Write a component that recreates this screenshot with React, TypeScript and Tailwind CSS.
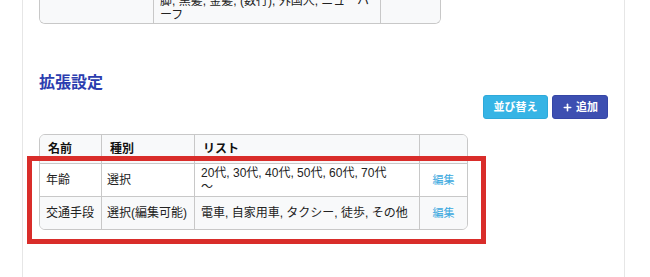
import { Plus } from "lucide-react";

type Row = { name: string; kind: string; list: React.ReactNode };

const rows: Row[] = [
  {
    name: "年齢",
    kind: "選択",
    list: (
      <>
        20代, 30代, 40代, 50代, 60代, 70代
        <br />〜
      </>
    ),
  },
  { name: "交通手段", kind: "選択(編集可能)", list: "電車, 自家用車, タクシー, 徒歩, その他" },
];

export default function App() {
  return (
    <div className="min-h-[277px] bg-white font-['Liberation_Sans','Noto_Sans_CJK_JP',sans-serif] text-[12px] text-[#222]">
      <div className="ml-[22px] w-[603px] min-h-[277px] border-x border-[#e6e6e6] px-4">
        {/* previous table (cut off at the top) */}
        <div className="h-[24px] overflow-hidden flex flex-col justify-end">
          <div className="shrink-0 w-[402px] border border-t-0 border-[#c8c8c8] rounded-b-[6px] overflow-hidden">
            <table className="w-full table-fixed border-separate border-spacing-0">
              <colgroup>
                <col className="w-[113px]" />
                <col className="w-[227px]" />
                <col />
              </colgroup>
              <tbody>
                <tr className="bg-[#f8f9fa]">
                  <td />
                  <td className="border-l border-[#c8c8c8] pl-[6px] pt-[3px] pb-[1px] leading-[14px] align-middle">
                    脚, 黒髪, 金髪, (数行), 外国人, ニューハ
                    <br />
                    ーフ
                  </td>
                  <td className="border-l border-[#c8c8c8]" />
                </tr>
              </tbody>
            </table>
          </div>
        </div>

        {/* 拡張設定 */}
        <h2 className="mt-[47px] text-[16px] leading-[24px] font-bold text-[#2b3daf]">拡張設定</h2>
        <div className="flex justify-end gap-1">
          <button className="h-[24px] w-[65px] rounded-[3px] border border-[#2ea9da] bg-[#36b4e5] text-[11px] font-bold text-white">
            並び替え
          </button>
          <button className="h-[24px] w-[56px] rounded-[3px] border border-[#3546a6] bg-[#3d4fb1] text-[11px] font-bold text-white flex items-center justify-center gap-[3px]">
            <Plus size={11} strokeWidth={3.5} />
            追加
          </button>
        </div>

        <div className="relative mt-[15px] w-[429px]">
          <div className="border border-[#c8c8c8] rounded-[6px] overflow-hidden">
            <table className="w-full table-fixed border-separate border-spacing-0">
              <colgroup>
                <col className="w-[61px]" />
                <col className="w-[93px]" />
                <col className="w-[225px]" />
                <col />
              </colgroup>
              <thead>
                <tr className="bg-[#f8f9fa]">
                  {["名前", "種別", "リスト", ""].map((h, i) => (
                    <th
                      key={i}
                      className={`h-[28px] pl-2 text-left font-bold text-[#111] align-middle ${i > 0 ? "border-l border-[#c8c8c8]" : ""}`}
                    >
                      {h}
                    </th>
                  ))}
                </tr>
              </thead>
              <tbody>
                {rows.map((r, i) => (
                  <tr key={r.name} className={i % 2 === 1 ? "bg-[#f8f9fa]" : "bg-white"}>
                    <td className="h-[33px] border-t border-[#c8c8c8] pl-[6px] py-[2px] leading-[14px] align-middle">
                      {r.name}
                    </td>
                    <td className="border-t border-l border-[#c8c8c8] pl-[5px] py-[2px] leading-[14px] align-middle whitespace-nowrap">
                      {r.kind}
                    </td>
                    <td className="border-t border-l border-[#c8c8c8] pl-[6px] py-[2px] leading-[14px] align-middle whitespace-nowrap">
                      {r.list}
                    </td>
                    <td className="border-t border-l border-[#c8c8c8] text-center align-middle text-[11px] text-[#3aa8de]">
                      編集
                    </td>
                  </tr>
                ))}
              </tbody>
            </table>
          </div>

          {/* annotation frame */}
          <div className="pointer-events-none absolute left-[-12px] top-[22px] h-[88px] w-[459px] border-[5px] border-[#d92d2a]" />
        </div>
      </div>
    </div>
  );
}
